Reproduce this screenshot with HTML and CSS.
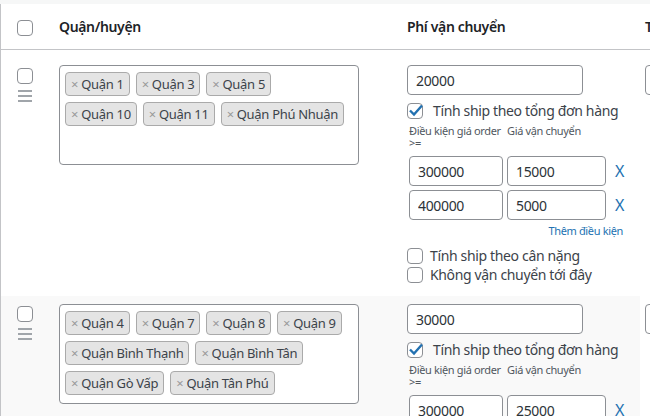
FILE: index.html
```html
<!DOCTYPE html>
<html lang="vi">
<head>
    <meta charset="UTF-8">
    <meta name="viewport" content="width=device-width, initial-scale=1.0">
    <title>Phí vận chuyển theo quận/huyện</title>
    <link rel="stylesheet" href="styles.css">
</head>
<body>
    <div class="top-strip"></div>
    <table class="zones">
        <colgroup>
            <col class="col-check">
            <col class="col-district">
            <col class="col-fee">
            <col class="col-extra">
        </colgroup>
        <thead>
            <tr>
                <th class="check-cell"><span class="checkbox"></span></th>
                <th>Quận/huyện</th>
                <th>Phí vận chuyển</th>
                <th class="extra-cell">Thời gian giao hàng</th>
            </tr>
        </thead>
        <tbody>
            <tr>
                <td class="check-cell">
                    <span class="checkbox row-check"></span>
                    <svg class="handle" width="14" height="12" viewBox="0 0 14 12"><rect y="0" width="14" height="2"/><rect y="5" width="14" height="2"/><rect y="10" width="14" height="2"/></svg>
                </td>
                <td>
                    <div class="district-select">
                        <span class="tag"><span class="tag-x">×</span>Quận 1</span>
                        <span class="tag"><span class="tag-x">×</span>Quận 3</span>
                        <span class="tag"><span class="tag-x">×</span>Quận 5</span>
                        <span class="tag"><span class="tag-x">×</span>Quận 10</span>
                        <span class="tag"><span class="tag-x">×</span>Quận 11</span>
                        <span class="tag"><span class="tag-x">×</span>Quận Phú Nhuận</span>
                    </div>
                </td>
                <td>
                    <input class="fee-input" type="text" value="20000">
                    <label class="option option-main">
                        <span class="checkbox checked"><svg viewBox="0 0 20 20" width="20" height="20"><path d="M4 9.5 L8 13.5 L16 4.5"/></svg></span>
                        Tính ship theo tổng đơn hàng
                    </label>
                    <div class="rules">
                        <div class="rule-label"><span class="nowrap">Điều kiện giá order</span><br>&gt;=</div>
                        <div class="rule-label"><span class="nowrap">Giá vận chuyển</span></div>
                        <div></div>
                        <input class="rule-input" type="text" value="300000">
                        <input class="rule-input" type="text" value="15000">
                        <span class="rule-remove">X</span>
                        <input class="rule-input" type="text" value="400000">
                        <input class="rule-input" type="text" value="5000">
                        <span class="rule-remove">X</span>
                    </div>
                    <div class="add-rule">Thêm điều kiện</div>
                    <div class="extra-options">
                        <label class="option"><span class="checkbox"></span>Tính ship theo cân nặng</label>
                        <label class="option"><span class="checkbox"></span>Không vận chuyển tới đây</label>
                    </div>
                </td>
                <td class="extra-cell"><input class="extra-input" type="text"></td>
            </tr>
            <tr class="alternate">
                <td class="check-cell">
                    <span class="checkbox row-check"></span>
                    <svg class="handle" width="14" height="12" viewBox="0 0 14 12"><rect y="0" width="14" height="2"/><rect y="5" width="14" height="2"/><rect y="10" width="14" height="2"/></svg>
                </td>
                <td>
                    <div class="district-select">
                        <span class="tag"><span class="tag-x">×</span>Quận 4</span>
                        <span class="tag"><span class="tag-x">×</span>Quận 7</span>
                        <span class="tag"><span class="tag-x">×</span>Quận 8</span>
                        <span class="tag"><span class="tag-x">×</span>Quận 9</span>
                        <span class="tag"><span class="tag-x">×</span>Quận Bình Thạnh</span>
                        <span class="tag"><span class="tag-x">×</span>Quận Bình Tân</span>
                        <span class="tag"><span class="tag-x">×</span>Quận Gò Vấp</span>
                        <span class="tag"><span class="tag-x">×</span>Quận Tân Phú</span>
                    </div>
                </td>
                <td>
                    <input class="fee-input" type="text" value="30000">
                    <label class="option option-main">
                        <span class="checkbox checked"><svg viewBox="0 0 20 20" width="20" height="20"><path d="M4 9.5 L8 13.5 L16 4.5"/></svg></span>
                        Tính ship theo tổng đơn hàng
                    </label>
                    <div class="rules">
                        <div class="rule-label"><span class="nowrap">Điều kiện giá order</span><br>&gt;=</div>
                        <div class="rule-label"><span class="nowrap">Giá vận chuyển</span></div>
                        <div></div>
                        <input class="rule-input" type="text" value="300000">
                        <input class="rule-input" type="text" value="25000">
                        <span class="rule-remove">X</span>
                    </div>
                </td>
                <td class="extra-cell"><input class="extra-input extra-lower" type="text"></td>
            </tr>
        </tbody>
    </table>
</body>
</html>
```

FILE: styles.css
```css
body {
    margin: 0;
    font-family: "Noto Sans", "Open Sans", sans-serif;
    font-size: 14px;
    letter-spacing: -0.35px;
    color: #2c3338;
    background-color: #fff;
    overflow: hidden;
}

.top-strip {
    height: 4px;
    background-color: #f6f7f7;
}

.zones {
    table-layout: fixed;
    border-collapse: separate;
    border-spacing: 0;
    width: 900px;
    border-left: 1px solid #c3c4c7;
}
.col-check { width: 48px; }
.col-district { width: 348px; }
.col-fee { width: 243px; }

th {
    height: 45px;
    padding: 0 10px;
    text-align: left;
    vertical-align: middle;
    font-weight: 600;
    color: #1d2327;
    border-bottom: 1px solid #c3c4c7;
}
td {
    padding: 15px 10px 12px;
    vertical-align: top;
}
.alternate td {
    padding-top: 8px;
    background-color: #f9f9f9;
}
.alternate td.extra-cell {
    background-color: #fff;
}
th.check-cell, td.check-cell {
    padding: 0;
    text-align: center;
}
td.check-cell {
    padding-top: 18px;
}
.alternate td.check-cell {
    padding-top: 10px;
}
th.extra-cell, td.extra-cell {
    padding-left: 5px;
    white-space: nowrap;
}

.checkbox {
    display: inline-block;
    position: relative;
    width: 16px;
    height: 16px;
    box-sizing: border-box;
    border: 1px solid #8c8f94;
    border-radius: 4px;
    background-color: #fff;
    vertical-align: middle;
    flex: none;
}
.checkbox svg {
    position: absolute;
    left: -2px;
    top: -3px;
}
.checkbox path {
    fill: none;
    stroke: #2271b1;
    stroke-width: 2.4;
}
.row-check {
    display: block;
    margin: 0 auto;
}
.handle {
    display: block;
    margin: 6px auto 0;
    fill: #a0a5aa;
}

.district-select {
    width: 300px;
    min-height: 100px;
    box-sizing: border-box;
    border: 1px solid #8c8f94;
    border-radius: 4px;
    background-color: #fff;
    padding: 6px 12px 6px 5px;
    display: flex;
    flex-wrap: wrap;
    align-content: flex-start;
    gap: 6px;
}
.tag {
    display: flex;
    align-items: center;
    height: 24px;
    box-sizing: border-box;
    padding: 0 5px;
    border: 1px solid #aaa;
    border-radius: 4px;
    background-color: #e4e4e4;
    font-size: 13px;
    letter-spacing: -0.3px;
    color: #3c434a;
}
.tag-x {
    color: #999;
    margin-right: 3px;
}

input[type="text"] {
    font-family: inherit;
    font-size: 14px;
    letter-spacing: inherit;
    color: #2c3338;
    height: 30px;
    box-sizing: border-box;
    padding: 0 8px;
    border: 1px solid #8c8f94;
    border-radius: 4px;
    background-color: #fff;
    margin: 0;
}
.fee-input {
    display: block;
    width: 176px;
}

.option {
    display: flex;
    align-items: center;
    gap: 7px;
    line-height: 19px;
    color: #3c434a;
}
.option-main {
    margin-top: 6px;
    gap: 10px;
    line-height: 20px;
}

.rules {
    display: grid;
    grid-template-columns: 94px 99px auto;
    column-gap: 4px;
    row-gap: 4px;
    align-items: center;
    margin: 4px 0 0 2px;
}
.rule-label {
    font-size: 11px;
    line-height: 12px;
    letter-spacing: -0.35px;
    color: #50575e;
    align-self: start;
    margin-bottom: 3px;
}
.nowrap {
    white-space: nowrap;
}
.rule-input {
    width: 100%;
}
.rule-remove {
    color: #2271b1;
    font-size: 16px;
    margin-left: 5px;
}
.add-rule {
    width: 216px;
    text-align: right;
    font-size: 11px;
    line-height: 14px;
    color: #2271b1;
    margin-top: 4px;
}
.extra-options {
    margin-top: 8px;
}

.extra-input {
    width: 120px;
}
.extra-lower {
    margin-top: 43px;
}
```
